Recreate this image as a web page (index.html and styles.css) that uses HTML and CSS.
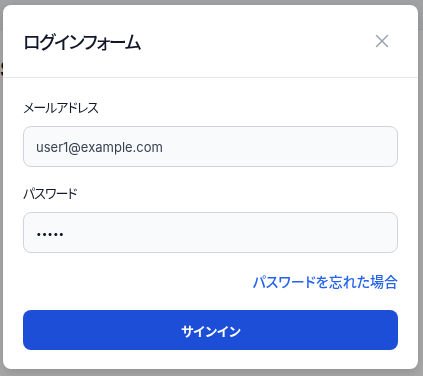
FILE: index.html
```html
<!DOCTYPE html>
<html lang="ja">
<head>
  <meta charset="UTF-8">
  <title>ログインフォーム</title>
  <link rel="stylesheet" href="styles.css">
</head>
<body>

  <!-- page behind the modal -->
  <div class="page">
    <div class="topbar"></div>
    <div class="page-title">Sample</div>
  </div>

  <!-- Login Modal -->
  <div class="backdrop">
    <div class="modal">
      <div class="modal-header">
        <h2>ログインフォーム</h2>
        <span class="close">
          <svg width="14" height="14" viewBox="0 0 14 14" fill="none" stroke="currentColor" stroke-width="1.5" stroke-linecap="round">
            <path d="M1.5 1.5L12.5 12.5M12.5 1.5L1.5 12.5"/>
          </svg>
        </span>
      </div>

      <form class="modal-body">
        <label for="email">メールアドレス</label>
        <input type="email" id="email" value="user1@example.com">

        <label for="password">パスワード</label>
        <input type="password" id="password" class="secret" value="12345">

        <div class="forgot"><a href="#">パスワードを忘れた場合</a></div>

        <button type="submit">サインイン</button>
      </form>
    </div>
  </div>

</body>
</html>
```

FILE: styles.css
```css
body {
  margin: 0;
  padding: 0;
  font-family: 'Inter', 'Noto Sans CJK JP', sans-serif;
  font-feature-settings: "palt";
  background-color: white;
}

.page {
  height: 376px;
  overflow: hidden;
}

.topbar {
  height: 29px;
  background-color: #f3f4f6;
  border-bottom: 1px solid #e5e7eb;
}

.page-title {
  margin: 26px 0 0 0;
  font-size: 22px;
  font-weight: 700;
  color: #111827;
}

/* Modal */
.backdrop {
  position: fixed;
  inset: 0;
  background-color: rgba(0, 0, 0, 0.34);
  display: flex;
  justify-content: center;
  padding-top: 5px;
}

.modal {
  width: 415px;
  height: 364px;
  margin-left: -2px;
  background-color: white;
  border-radius: 8px;
  box-shadow: 0 4px 12px rgba(0, 0, 0, 0.15);
  overflow: hidden;
}

.modal-header {
  height: 72px;
  padding: 0 20px;
  display: flex;
  align-items: center;
  justify-content: space-between;
  border-bottom: 1px solid #e5e7eb;
}

.modal-header h2 {
  margin: 0;
  font-size: 18px;
  font-weight: 500;
  letter-spacing: -1.4px;
  color: #111827;
}

.close {
  display: flex;
  color: #9ca3af;
  margin-right: 9px;
}

.modal-body {
  padding: 19px 20px 20px;
  display: flex;
  flex-direction: column;
}

.modal-body label {
  font-size: 13px;
  line-height: 20px;
  letter-spacing: -1px;
  color: #111827;
  margin-bottom: 9px;
}

.modal-body input {
  height: 41px;
  box-sizing: border-box;
  padding: 0 12px;
  border: 1px solid #d1d5db;
  border-radius: 8px;
  background-color: #f9fafb;
  font-family: inherit;
  font-size: 13px;
  color: #374151;
  margin-bottom: 16px;
}

.modal-body input.secret {
  font-size: 10px;
  color: #111827;
}

.forgot {
  margin-top: 3px;
  text-align: right;
  font-size: 14px;
  line-height: 20px;
}

.forgot a {
  color: #2563eb;
  font-weight: 500;
  text-decoration: none;
}

.modal-body button {
  margin-top: 18px;
  height: 40px;
  border: none;
  border-radius: 8px;
  background-color: #1d4ed8;
  color: white;
  font-family: inherit;
  font-size: 13px;
  font-weight: 700;
  letter-spacing: -1.2px;
  cursor: pointer;
}
```
